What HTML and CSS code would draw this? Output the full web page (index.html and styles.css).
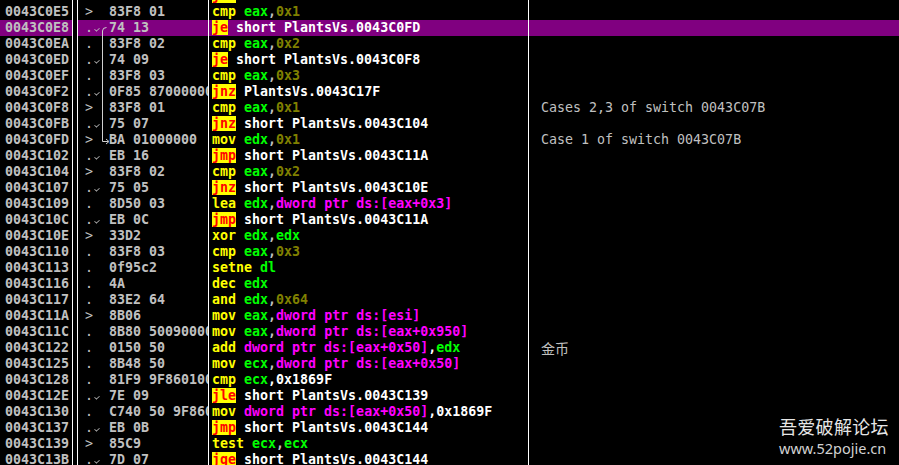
FILE: index.html
```html
<!DOCTYPE html>
<html lang="en">
<head>
    <meta charset="UTF-8">
    <title>CPU - PlantsVs</title>
    <link rel="stylesheet" href="styles.css">
</head>
<body>
<div class="screen">
    <div class="listing">
        <div class="row"><div class="addr"></div><div class="gap"></div><div class="hex"><span class="mk">.<i class="dn"></i></span></div><div class="dis"><span class="jm">jnz</span> <span class="tg">short PlantsVs.0043C17F</span></div><div class="cmt"></div></div>
        <div class="row"><div class="addr">0043C0E5</div><div class="gap"></div><div class="hex"><span class="mk">&gt;</span>83F8 01</div><div class="dis"><span class="mn">cmp</span> <span class="rg">eax</span><span class="pc">,</span><span class="im">0x1</span></div><div class="cmt"></div></div>
        <div class="row sel"><div class="addr">0043C0E8</div><div class="gap"></div><div class="hex"><span class="mk">.<i class="dn"></i></span>74 13</div><div class="dis"><span class="jm">je</span> <span class="tg">short PlantsVs.0043C0FD</span></div><div class="cmt"></div></div>
        <div class="row"><div class="addr">0043C0EA</div><div class="gap"></div><div class="hex"><span class="mk">.</span>83F8 02</div><div class="dis"><span class="mn">cmp</span> <span class="rg">eax</span><span class="pc">,</span><span class="im">0x2</span></div><div class="cmt"></div></div>
        <div class="row"><div class="addr">0043C0ED</div><div class="gap"></div><div class="hex"><span class="mk">.<i class="dn"></i></span>74 09</div><div class="dis"><span class="jm">je</span> <span class="tg">short PlantsVs.0043C0F8</span></div><div class="cmt"></div></div>
        <div class="row"><div class="addr">0043C0EF</div><div class="gap"></div><div class="hex"><span class="mk">.</span>83F8 03</div><div class="dis"><span class="mn">cmp</span> <span class="rg">eax</span><span class="pc">,</span><span class="im">0x3</span></div><div class="cmt"></div></div>
        <div class="row"><div class="addr">0043C0F2</div><div class="gap"></div><div class="hex"><span class="mk">.<i class="dn"></i></span>0F85 87000000</div><div class="dis"><span class="jm">jnz</span> <span class="tg">PlantsVs.0043C17F</span></div><div class="cmt"></div></div>
        <div class="row"><div class="addr">0043C0F8</div><div class="gap"></div><div class="hex"><span class="mk">&gt;</span>83F8 01</div><div class="dis"><span class="mn">cmp</span> <span class="rg">eax</span><span class="pc">,</span><span class="im">0x1</span></div><div class="cmt">Cases 2,3 of switch 0043C07B</div></div>
        <div class="row"><div class="addr">0043C0FB</div><div class="gap"></div><div class="hex"><span class="mk">.<i class="dn"></i></span>75 07</div><div class="dis"><span class="jm">jnz</span> <span class="tg">short PlantsVs.0043C104</span></div><div class="cmt"></div></div>
        <div class="row"><div class="addr">0043C0FD</div><div class="gap"></div><div class="hex"><span class="mk">&gt;</span>BA 01000000</div><div class="dis"><span class="mn">mov</span> <span class="rg">edx</span><span class="pc">,</span><span class="im">0x1</span></div><div class="cmt">Case 1 of switch 0043C07B</div></div>
        <div class="row"><div class="addr">0043C102</div><div class="gap"></div><div class="hex"><span class="mk">.<i class="dn"></i></span>EB 16</div><div class="dis"><span class="jm">jmp</span> <span class="tg">short PlantsVs.0043C11A</span></div><div class="cmt"></div></div>
        <div class="row"><div class="addr">0043C104</div><div class="gap"></div><div class="hex"><span class="mk">&gt;</span>83F8 02</div><div class="dis"><span class="mn">cmp</span> <span class="rg">eax</span><span class="pc">,</span><span class="im">0x2</span></div><div class="cmt"></div></div>
        <div class="row"><div class="addr">0043C107</div><div class="gap"></div><div class="hex"><span class="mk">.<i class="dn"></i></span>75 05</div><div class="dis"><span class="jm">jnz</span> <span class="tg">short PlantsVs.0043C10E</span></div><div class="cmt"></div></div>
        <div class="row"><div class="addr">0043C109</div><div class="gap"></div><div class="hex"><span class="mk">.</span>8D50 03</div><div class="dis"><span class="mn">lea</span> <span class="rg">edx</span><span class="pc">,</span><span class="mem">dword ptr ds:[eax+0x3]</span></div><div class="cmt"></div></div>
        <div class="row"><div class="addr">0043C10C</div><div class="gap"></div><div class="hex"><span class="mk">.<i class="dn"></i></span>EB 0C</div><div class="dis"><span class="jm">jmp</span> <span class="tg">short PlantsVs.0043C11A</span></div><div class="cmt"></div></div>
        <div class="row"><div class="addr">0043C10E</div><div class="gap"></div><div class="hex"><span class="mk">&gt;</span>33D2</div><div class="dis"><span class="mn">xor</span> <span class="rg">edx</span><span class="pc">,</span><span class="rg">edx</span></div><div class="cmt"></div></div>
        <div class="row"><div class="addr">0043C110</div><div class="gap"></div><div class="hex"><span class="mk">.</span>83F8 03</div><div class="dis"><span class="mn">cmp</span> <span class="rg">eax</span><span class="pc">,</span><span class="im">0x3</span></div><div class="cmt"></div></div>
        <div class="row"><div class="addr">0043C113</div><div class="gap"></div><div class="hex"><span class="mk">.</span>0f95c2</div><div class="dis"><span class="mn">setne</span> <span class="rg">dl</span></div><div class="cmt"></div></div>
        <div class="row"><div class="addr">0043C116</div><div class="gap"></div><div class="hex"><span class="mk">.</span>4A</div><div class="dis"><span class="mn">dec</span> <span class="rg">edx</span></div><div class="cmt"></div></div>
        <div class="row"><div class="addr">0043C117</div><div class="gap"></div><div class="hex"><span class="mk">.</span>83E2 64</div><div class="dis"><span class="mn">and</span> <span class="rg">edx</span><span class="pc">,</span><span class="im">0x64</span></div><div class="cmt"></div></div>
        <div class="row"><div class="addr">0043C11A</div><div class="gap"></div><div class="hex"><span class="mk">&gt;</span>8B06</div><div class="dis"><span class="mn">mov</span> <span class="rg">eax</span><span class="pc">,</span><span class="mem">dword ptr ds:[esi]</span></div><div class="cmt"></div></div>
        <div class="row"><div class="addr">0043C11C</div><div class="gap"></div><div class="hex"><span class="mk">.</span>8B80 50090000</div><div class="dis"><span class="mn">mov</span> <span class="rg">eax</span><span class="pc">,</span><span class="mem">dword ptr ds:[eax+0x950]</span></div><div class="cmt"></div></div>
        <div class="row"><div class="addr">0043C122</div><div class="gap"></div><div class="hex"><span class="mk">.</span>0150 50</div><div class="dis"><span class="mn">add</span> <span class="mem">dword ptr ds:[eax+0x50]</span><span class="pw">,</span><span class="rg">edx</span></div><div class="cmt cjk">金币</div></div>
        <div class="row"><div class="addr">0043C125</div><div class="gap"></div><div class="hex"><span class="mk">.</span>8B48 50</div><div class="dis"><span class="mn">mov</span> <span class="rg">ecx</span><span class="pc">,</span><span class="mem">dword ptr ds:[eax+0x50]</span></div><div class="cmt"></div></div>
        <div class="row"><div class="addr">0043C128</div><div class="gap"></div><div class="hex"><span class="mk">.</span>81F9 9F860100</div><div class="dis"><span class="mn">cmp</span> <span class="rg">ecx</span><span class="pw">,</span><span class="tg">0x1869F</span></div><div class="cmt"></div></div>
        <div class="row"><div class="addr">0043C12E</div><div class="gap"></div><div class="hex"><span class="mk">.<i class="dn"></i></span>7E 09</div><div class="dis"><span class="jm">jle</span> <span class="tg">short PlantsVs.0043C139</span></div><div class="cmt"></div></div>
        <div class="row"><div class="addr">0043C130</div><div class="gap"></div><div class="hex"><span class="mk">.</span>C740 50 9F860100</div><div class="dis"><span class="mn">mov</span> <span class="mem">dword ptr ds:[eax+0x50]</span><span class="pw">,</span><span class="tg">0x1869F</span></div><div class="cmt"></div></div>
        <div class="row"><div class="addr">0043C137</div><div class="gap"></div><div class="hex"><span class="mk">.<i class="dn"></i></span>EB 0B</div><div class="dis"><span class="jm">jmp</span> <span class="tg">short PlantsVs.0043C144</span></div><div class="cmt"></div></div>
        <div class="row"><div class="addr">0043C139</div><div class="gap"></div><div class="hex"><span class="mk">&gt;</span>85C9</div><div class="dis"><span class="mn">test</span> <span class="rg">ecx</span><span class="pc">,</span><span class="rg">ecx</span></div><div class="cmt"></div></div>
        <div class="row"><div class="addr">0043C13B</div><div class="gap"></div><div class="hex"><span class="mk">.<i class="dn"></i></span>7D 07</div><div class="dis"><span class="jm">jge</span> <span class="tg">short PlantsVs.0043C144</span></div><div class="cmt"></div></div>
    </div>

    <!-- jump path from 0043C0E8 to 0043C0FD -->
    <svg class="jump" width="120" height="160" viewBox="0 0 120 160">
        <path d="M106.5 27.5 Q102.5 27.5 102.5 31 V141.5 H108" fill="none" stroke="#d0d0d0" stroke-width="1"/>
        <path d="M106 139 L109 141.5 L106 144" fill="none" stroke="#d0d0d0" stroke-width="1"/>
    </svg>

    <div class="mark">
        <div class="mark-cn">吾爱破解论坛</div>
        <div class="mark-url">www.52pojie.cn</div>
    </div>
</div>
</body>
</html>
```

FILE: styles.css
```css
* {
    box-sizing: border-box;
}
body {
    margin: 0;
    background-color: #000;
    overflow: hidden;
}
.screen {
    position: relative;
    width: 899px;
    height: 465px;
    overflow: hidden;
    background: #000;
}
.listing {
    margin-top: -12px;
    font-family: "DejaVu Sans Mono", "Liberation Mono", monospace;
    font-size: 13.3px;
    font-weight: bold;
    color: #c0c0c0;
}
.row {
    display: grid;
    grid-template-columns: 73px 4px 132px 320px 1fr;
    height: 16px;
    line-height: 16px;
    white-space: pre;
}
.row.sel {
    background-color: #800080;
}
.addr {
    border-right: 1px solid #fff;
    padding-left: 5px;
}
.gap {
    background: #000;
}
.hex {
    border-left: 1px solid #fff;
    border-right: 1px solid #fff;
    overflow: hidden;
}
.mk {
    display: inline-block;
    width: 31px;
    padding-left: 7px;
    font-weight: normal;
}
.dn {
    display: inline-block;
    width: 6px;
    height: 4px;
    margin-left: 1px;
    border-left: 1px solid #c0c0c0;
    border-bottom: 1px solid #c0c0c0;
    transform: scale(0.8, 0.7) rotate(-45deg);
    vertical-align: 1px;
}
.dis {
    border-right: 1px solid #fff;
    padding-left: 3px;
    overflow: hidden;
}
.cmt {
    padding-left: 12px;
    font-weight: normal;
    overflow: hidden;
}
.cjk {
    font-family: "Noto Sans CJK SC", sans-serif;
    font-size: 14px;
}
.mn { color: #ffff00; }
.jm {
    color: #ff0000;
    background-color: #ffff00;
}
.rg { color: #00ff00; }
.im { color: #808000; }
.mem { color: #ff00ff; }
.tg { color: #fff; }
.pc { color: #c0c0c0; }
.pw { color: #fff; }

.jump {
    position: absolute;
    left: 0;
    top: 0;
}
.mark {
    position: absolute;
    left: 779px;
    top: 413px;
    font-family: "Noto Sans CJK SC", "Noto Sans", sans-serif;
    color: #e6e6e6;
    text-shadow: 0 0 2px rgba(0, 0, 0, 0.6);
}
.mark-cn {
    font-size: 18px;
    line-height: 26px;
    letter-spacing: 0.3px;
}
.mark-url {
    font-family: "Noto Sans", sans-serif;
    font-size: 14.5px;
    line-height: 18px;
    color: #d2d2d2;
}
```
